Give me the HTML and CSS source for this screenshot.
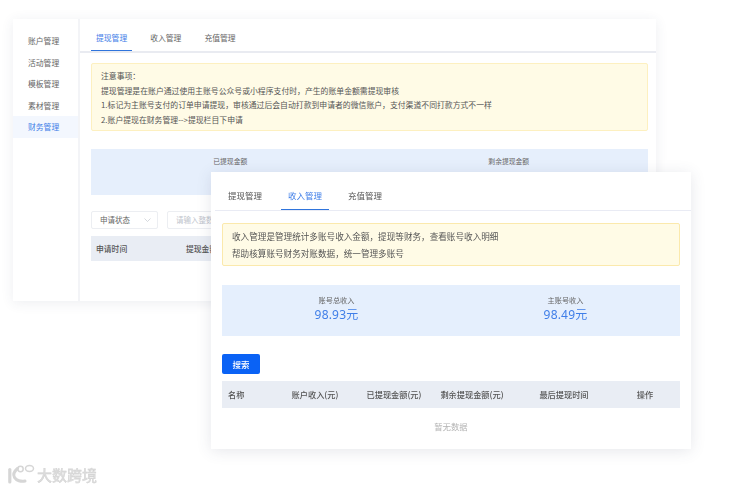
FILE: index.html
```html
<!DOCTYPE html>
<html lang="zh-CN">
<head>
<meta charset="utf-8">
<title>财务管理</title>
<link rel="stylesheet" href="styles.css">
</head>
<body>
<div class="desktop">
  <section class="window back">
    <nav class="sidebar">
      <a class="side-item">账户管理</a>
      <a class="side-item">活动管理</a>
      <a class="side-item">模板管理</a>
      <a class="side-item">素材管理</a>
      <a class="side-item active">财务管理</a>
    </nav>
    <div class="main">
      <div class="tabs tabs-back">
        <span class="tab active">提现管理</span>
        <span class="tab">收入管理</span>
        <span class="tab">充值管理</span>
      </div>
      <div class="content-back">
        <div class="alert alert-back">
          <p>注意事项：</p>
          <p>提现管理是在账户通过使用主账号公众号或小程序支付时，产生的账单金额需提现审核</p>
          <p>1.标记为主账号支付的订单申请提现，审核通过后会自动打款到申请者的微信账户，支付渠道不同打款方式不一样</p>
          <p>2.账户提现在财务管理--&gt;提现栏目下申请</p>
        </div>
        <div class="stats-back">
          <span>已提现金额</span>
          <span>剩余提现金额</span>
        </div>
        <div class="filters">
          <div class="select">申请状态
            <svg class="chevron" width="7" height="4" viewBox="0 0 7 4"><path d="M.5.5l3 3 3-3" fill="none" stroke="#c4c8d0" stroke-width=".7"/></svg>
          </div>
          <div class="input">请输入整数</div>
        </div>
        <div class="thead-back">
          <span class="cell-time">申请时间</span>
          <span>提现金额</span>
        </div>
      </div>
    </div>
  </section>

  <section class="window front">
    <div class="tabs tabs-front">
      <span class="tab">提现管理</span>
      <span class="tab active">收入管理</span>
      <span class="tab">充值管理</span>
    </div>
    <div class="content-front">
      <div class="alert alert-front">
        <p>收入管理是管理统计多账号收入金额，提现等财务，查看账号收入明细</p>
        <p>帮助核算账号财务对账数据，统一管理多账号</p>
      </div>
      <div class="stats-front">
        <div class="stat">
          <div class="stat-label">账号总收入</div>
          <div class="stat-value">98.93元</div>
        </div>
        <div class="stat">
          <div class="stat-label">主账号收入</div>
          <div class="stat-value">98.49元</div>
        </div>
      </div>
      <button class="search" type="button">搜索</button>
      <div class="thead-front">
        <span class="first">名称</span>
        <span>账户收入(元)</span>
        <span>已提现金额(元)</span>
        <span>剩余提现金额(元)</span>
        <span>最后提现时间</span>
        <span>操作</span>
      </div>
      <div class="empty">暂无数据</div>
    </div>
  </section>

  <div class="watermark">
    <svg width="28" height="21" viewBox="0 0 28 21" fill="none" stroke="#d6d6d6">
      <path d="M2.800 5.500v12.500" stroke-width="3.200" stroke-linecap="round"/>
      <path d="M10.500 4.500C6.500 8 6 11 7.500 13.500c1.800 3 6.500 4.500 10.500 3.500" stroke-width="3" stroke-linecap="round"/>
      <circle cx="13.500" cy="5" r="2.700" stroke-width="1.500"/>
      <ellipse cx="22.500" cy="4.500" rx="4" ry="3" stroke-width="1.500"/>
    </svg>
    <span class="wm-text">大数跨境</span>
  </div>
</div>
</body>
</html>
```
FILE: styles.css
```css
* { box-sizing: border-box; }
html, body { margin: 0; padding: 0; background: #fff; }
body { font-family: "Noto Sans CJK SC", "Noto Sans", sans-serif; color: #555; }
p { margin: 0; }

.desktop {
  position: relative;
  width: 738px;
  height: 489px;
  overflow: hidden;
  filter: blur(0.5px);
}
.window {
  position: absolute;
  background: #fff;
  box-shadow: 0 2px 12px rgba(60, 70, 100, .09);
}
.back {
  left: 13px; top: 19px; width: 643px; height: 282px;
  display: flex;
  gap: 2px;
  background: #f3f4f7;
}
.sidebar {
  width: 65px;
  background: #fff;
  padding-top: 11px;
  display: flex;
  flex-direction: column;
}
.side-item {
  height: 21.500px;
  line-height: 21.500px;
  padding-left: 15px;
  font-size: 7.800px;
  color: #666;
}
.side-item.active { background: #f3f7fe; color: #3f7ee8; }
.main { flex: 1; background: #fff; }

.tabs { display: flex; align-items: stretch; }
.tab { position: relative; display: flex; align-items: center; justify-content: center; }
.tab.active { color: #3f7ee8; }
.tab.active::after {
  content: "";
  position: absolute;
  left: 0; right: 0; bottom: 0;
  height: 1px;
  background: #2f74dc;
}
.tabs-back {
  height: 34px;
  padding-left: 11px;
  gap: 13px;
  border-bottom: 2px solid #e9ebf1;
  font-size: 7.800px;
  color: #666;
}
.tabs-back .tab { padding: 4px 5px 0; height: 32px; }

.content-back { padding: 10px 8px 0 11px; }
.alert {
  background: #fffbe6;
  border: 1px solid #fdf0c0;
  border-radius: 2px;
}
.alert-back {
  height: 68px;
  padding: 5px 9px 0;
  font-size: 7.850px;
  line-height: 14.700px;
  color: #555;
  white-space: nowrap;
}
.stats-back {
  margin-top: 18px;
  height: 46px;
  background: #e6effc;
  display: grid;
  grid-template-columns: 1fr 1fr;
  font-size: 6.800px;
  color: #666;
  text-align: center;
  padding-top: 7px;
}
.filters { display: flex; gap: 9px; margin-top: 16px; height: 18px; }
.select, .input {
  height: 18px;
  border: 1px solid #eceef2;
  border-radius: 2px;
  font-size: 7.500px;
  line-height: 16px;
  padding-left: 8px;
}
.select { width: 67px; position: relative; color: #666; }
.chevron { position: absolute; right: 6px; top: 6px; }
.input { width: 80px; color: #c0c4cc; }
.thead-back {
  margin-top: 7px;
  height: 25px;
  background: #e9edf4;
  display: flex;
  align-items: center;
  font-size: 7.800px;
  font-weight: 500;
  color: #555;
  white-space: nowrap;
  padding-left: 5px;
}
.cell-time { width: 90px; }

.front {
  left: 211px; top: 172px; width: 480px; height: 277px;
  box-shadow: 0 2px 14px rgba(60, 70, 100, .13);
}
.tabs-front {
  height: 39px;
  padding-left: 10px;
  gap: 12px;
  font-size: 8.500px;
  color: #555;
  position: relative;
}
.tabs-front::after {
  content: "";
  position: absolute;
  left: 4px; right: 0; bottom: 0;
  height: 1.500px;
  background: #e9ebf4;
}
.tabs-front .tab { padding: 8px 7px 0; height: 38px; z-index: 1; }
.tabs-front .tab.active::after { height: 1px; background: #2f74dc; }

.content-front { padding: 12px 11px 0; }
.alert-front {
  height: 43px;
  padding: 4px 9px 0;
  font-size: 8.600px;
  line-height: 16.500px;
  color: #555;
  background: #fffbe6;
  border-color: #fbe9ac;
  white-space: nowrap;
}
.stats-front {
  margin-top: 19px;
  height: 51px;
  background: #e5effd;
  display: grid;
  grid-template-columns: 1fr 1fr;
  text-align: center;
  padding-top: 10px;
}
.stat-label { font-size: 7.200px; line-height: 10px; color: #666; }
.stat-value {
  margin-top: 1px;
  font-size: 12px;
  line-height: 17px;
  color: #3f7ee8;
  letter-spacing: .2px;
  font-family: "Noto Sans", "Noto Sans CJK SC", sans-serif;
}
.search {
  display: block;
  margin-top: 18px;
  width: 38px;
  height: 20px;
  background: #0a62f5;
  border: 0;
  border-radius: 2px;
  color: #fff;
  font: 500 8.500px/20px "Noto Sans CJK SC", sans-serif;
  padding: 0;
}
.thead-front {
  margin-top: 7px;
  height: 27px;
  padding-bottom: 2px;
  background: #e9edf4;
  display: grid;
  grid-template-columns: 56px 74px 84px 72px 112px 50px;
  align-items: center;
  font-size: 8.200px;
  font-weight: 500;
  color: #555;
  text-align: center;
  white-space: nowrap;
}
.thead-front .first { text-align: left; padding-left: 6px; }
.empty {
  margin-top: 11px;
  text-align: center;
  font-size: 8.400px;
  line-height: 14px;
  color: #b4b4b4;
}

.watermark {
  position: absolute;
  left: 7px; top: 464px;
  display: flex;
  align-items: center;
  gap: 2px;
}
.wm-text {
  font-size: 15px;
  line-height: 21px;
  font-weight: 500;
  color: #dcdcdc;
  -webkit-text-stroke: .3px #cfcfcf;
  white-space: nowrap;
}
```
